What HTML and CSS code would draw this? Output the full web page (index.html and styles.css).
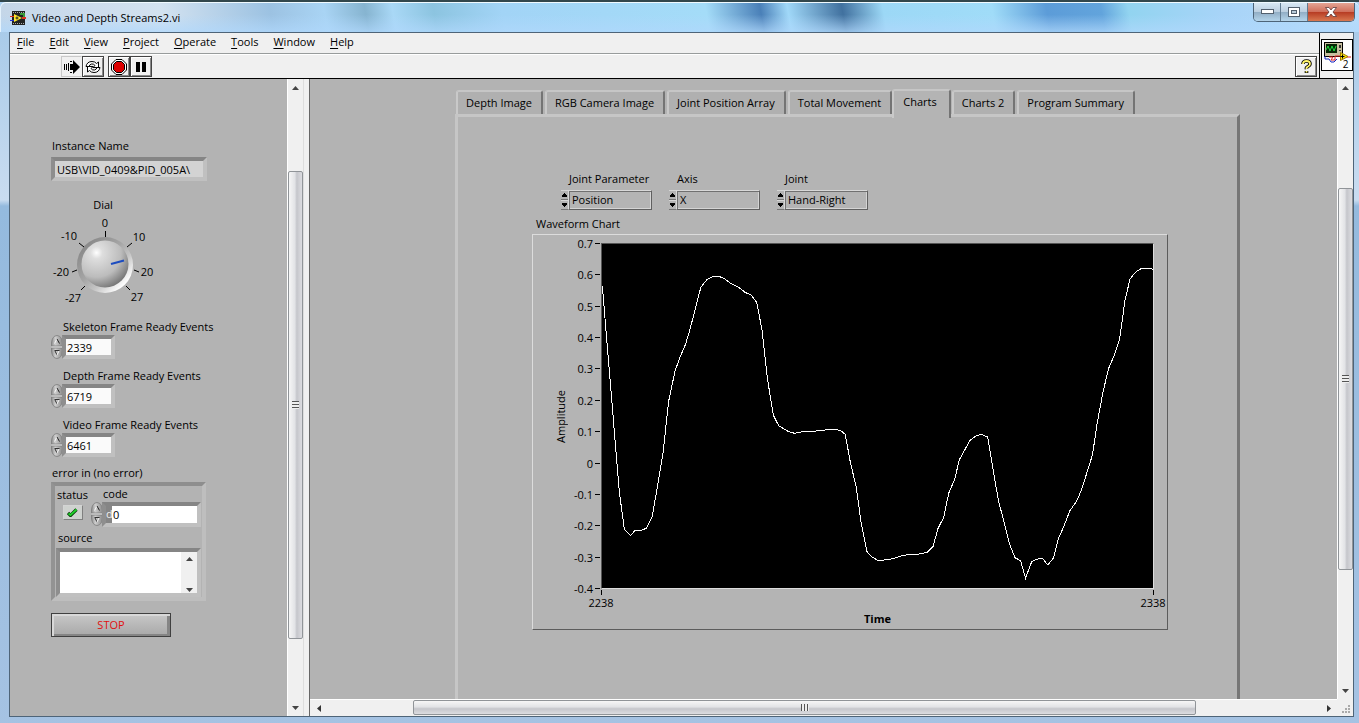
FILE: index.html
```html
<!DOCTYPE html>
<html lang="en">
<head>
<meta charset="utf-8">
<title>Video and Depth Streams2.vi</title>
<link rel="stylesheet" href="styles.css">
</head>
<body>
<svg class="defs" width="0" height="0" aria-hidden="true">
  <defs>
    <linearGradient id="metal" x1="0" x2="1" y1="0" y2="0">
      <stop offset="0" stop-color="#8e8e8e"/><stop offset=".35" stop-color="#cecece"/><stop offset="1" stop-color="#8a8a8a"/>
    </linearGradient>
    <radialGradient id="knob" cx=".32" cy=".26" r=".8">
      <stop offset="0" stop-color="#fff"/><stop offset=".16" stop-color="#dedede"/><stop offset=".65" stop-color="#bcbcbc"/><stop offset="1" stop-color="#747474"/>
    </radialGradient>
    <linearGradient id="ring" x1="0" x2="1" y1="0" y2="1">
      <stop offset=".1" stop-color="#858585"/><stop offset=".45" stop-color="#a6a6a6"/><stop offset=".62" stop-color="#c4c4c4"/><stop offset=".85" stop-color="#fff"/><stop offset="1" stop-color="#c8c8c8"/>
    </linearGradient>
    <symbol id="spinner" viewBox="0 0 12 24">
      <path d="M.5 11V8Q1 1 6 .5Q11 1 11.500 8V11ZM.5 13V16Q1 23 6 23.500Q11 23 11.500 16V13Z" fill="url(#metal)" stroke="#7c7c7c" stroke-width=".8"/>
      <path d="M.5 12H11.500" stroke="#dcdcdc"/>
      <path d="M3.500 8.500L6 4" stroke="#f8f8f8"/><path d="M6 4L8.500 8.500" stroke="#222"/>
      <path d="M3.500 15.500H8.500" stroke="#333"/><path d="M4 16L6 20" stroke="#333"/><path d="M8 16L6 20" stroke="#f8f8f8"/>
    </symbol>
    <symbol id="up" viewBox="0 0 7 4"><path d="M0 4L3.500 0L7 4Z" fill="#444"/></symbol>
    <symbol id="down" viewBox="0 0 7 4"><path d="M0 0L3.500 4L7 0Z" fill="#444"/></symbol>
    <symbol id="left" viewBox="0 0 4 7"><path d="M4 0L0 3.500L4 7Z" fill="#333"/></symbol>
    <symbol id="right" viewBox="0 0 4 7"><path d="M0 0L4 3.500L0 7Z" fill="#333"/></symbol>
    <symbol id="step-up" viewBox="0 0 5 4"><path d="M2 0H3V1H4V2H5V4H0V2H1V1H2Z"/></symbol>
    <symbol id="step-down" viewBox="0 0 5 4"><path d="M0 0H5V2H4V3H3V4H2V3H1V2H0Z"/></symbol>
  </defs>
</svg>

<header class="titlebar">
  <svg class="app-icon" viewBox="0 0 16 14" width="16" height="14">
    <rect x="2" width="13" height="14" fill="#222"/>
    <path d="M3 1.500H14M3 12.500H14" stroke="#aaa" stroke-dasharray="1 1"/>
    <path d="M10 3H14V7" fill="none" stroke="#3a9a3a" stroke-width="2"/>
    <path d="M4 3L12 7L4 11Z" fill="#ffe62b"/><path d="M7 5.500V8.500M5.500 7H8.500" stroke="#222"/>
    <path d="M0 5.500H4" stroke="#e03020"/><path d="M0 9.500H4" stroke="#2030d0"/><path d="M12 7H16" stroke="#e03020" stroke-width="2"/>
  </svg>
  <h1 class="title">Video and Depth Streams2.vi</h1>
  <div class="window-buttons">
    <button class="wb" aria-label="Minimize"><svg width="13" height="6" viewBox="0 0 13 6"><rect x=".5" y=".5" width="12" height="4" fill="#fff" stroke="#53606e"/></svg></button>
    <button class="wb" aria-label="Maximize"><svg width="12" height="10" viewBox="0 0 12 10"><rect x=".5" y=".5" width="11" height="9" fill="#fff" stroke="#53606e"/><rect x="3.500" y="3.500" width="5" height="3" fill="#b9cbd9" stroke="#53606e"/></svg></button>
    <button class="wb wb-close" aria-label="Close"><svg width="12" height="10" viewBox="0 0 12 10"><path d="M.5 .5H4L6 3L8 .5H11.500L8 5L11.500 9.500H8L6 7L4 9.500H.5L4 5Z" fill="#fff" stroke="#5e3a3a" stroke-width=".8"/></svg></button>
  </div>
</header>

<main class="client">
  <div class="top">
    <div class="bars">
      <nav class="menu">
        <button><u>F</u>ile</button><button><u>E</u>dit</button><button><u>V</u>iew</button><button><u>P</u>roject</button><button><u>O</u>perate</button><button><u>T</u>ools</button><button><u>W</u>indow</button><button><u>H</u>elp</button>
      </nav>
      <div class="toolbar">
        <button class="tool tool-flat" aria-label="Run"><svg width="16" height="14" viewBox="0 0 16 14"><path d="M.5 4V10M2.500 4V10M4.500 3V11" stroke="#000"/><path d="M6 4H9V0L16 7L9 14V10H6Z"/><path d="M6 1.500H8M6 12.500H8" stroke="#000"/></svg></button>
        <button class="tool" aria-label="Run continuously"><svg width="16" height="14" viewBox="0 0 16 14" fill="#fff" stroke="#000"><path d="M1 6.500Q2 1.500 7 1.500Q10 1.500 11.500 3.500L13.500 2V7.500H8L10 5.500Q8.500 3.500 6.500 4Q4.500 4.500 4 6.500Z"/><path d="M15 7.500Q14 12.500 9 12.500Q6 12.500 4.500 10.500L2.500 12V6.500H8L6 8.500Q7.500 10.500 9.500 10Q11.500 9.500 12 7.500Z"/></svg></button>
        <span class="tool-gap"></span>
        <button class="tool" aria-label="Abort"><svg width="16" height="16" viewBox="0 0 16 16"><path d="M5 .5H11L15.500 5V11L11 15.500H5L.5 11V5Z" fill="#fff" stroke="#000"/><path d="M5.500 2.500H10.500L13.500 5.500V10.500L10.500 13.500H5.500L2.500 10.500V5.500Z" fill="#dc0000" stroke="#000"/></svg></button>
        <button class="tool" aria-label="Pause"><svg width="10" height="10" viewBox="0 0 10 10"><path d="M0 0H4V10H0ZM6 0H10V10H6Z"/></svg></button>
        <button class="tool tool-help" aria-label="Context help"><svg width="11" height="15" viewBox="0 0 11 15"><path d="M2 5Q2 2 5.500 2T9 5Q9 6.500 7 7.500T5.500 10M5.500 12V14" fill="none" stroke="#000" stroke-width="3.600"/><path d="M2 5Q2 2 5.500 2T9 5Q9 6.500 7 7.500T5.500 10M5.500 12V13.500" fill="none" stroke="#fff46a" stroke-width="1.800"/></svg></button>
      </div>
    </div>
    <div class="vi-cell">
      <div class="vi-icon">
        <svg width="28" height="28" viewBox="0 0 28 28">
          <rect x="1.500" y="1.500" width="18" height="14" fill="#c8c0a0" stroke="#000"/><rect x="3" y="3" width="11" height="9" fill="#062806"/>
          <path d="M3 9L5 5L7 10L9 5L11 10L13 5" fill="none" stroke="#20e040"/><path d="M17 4V7M17 9V10" stroke="#333" stroke-width="2"/>
          <path d="M2 15V18H6L8 21H11L14 18" fill="none" stroke="#1626c0"/><path d="M6 16H10L8 19L12 19V15H17M22 16H28" fill="none" stroke="#e02020"/>
          <path d="M17.500 11.500L25 15.500L17.500 19.500Z" fill="#ffe80a" stroke="#a07a00"/><path d="M19.500 13.500V17.500M17.500 15.500H21.500" stroke="#000"/>
        </svg>
        <span class="vi-number">2</span>
      </div>
    </div>
  </div>

  <div class="panes">
    <section class="left-pane">
      <div class="field">
        <label for="instance">Instance Name</label>
        <input id="instance" class="recess instance" value="USB\VID_0409&amp;PID_005A\" readonly>
      </div>
      <div class="dial">
        <span>Dial</span>
        <svg width="104" height="94" viewBox="0 0 104 94" role="img" aria-label="Dial at 20">
          <circle cx="54" cy="52" r="28" fill="url(#ring)"/><circle cx="54" cy="51" r="23.500" fill="url(#knob)"/>
          <path d="M60 51L73 47.500" stroke="#1c4cc0" stroke-width="2"/>
          <path d="M54.500 18V24M28 30L33 34M81 30L76 34M21 59L26 57M83 57L88 59M30 77L34 73M75 73L79 77" stroke="#000" fill="none"/>
          <g class="dial-text"><text x="54" y="14">0</text><text x="18" y="27">-10</text><text x="88" y="28">10</text><text x="10" y="63">-20</text><text x="96" y="63">20</text><text x="22" y="89">-27</text><text x="86" y="88">27</text></g>
        </svg>
      </div>
      <div class="counter"><label for="skel">Skeleton Frame Ready Events</label><div class="spin-row"><svg width="12" height="24"><use href="#spinner"/></svg><input id="skel" class="recess number" value="2339"></div></div>
      <div class="counter"><label for="depth">Depth Frame Ready Events</label><div class="spin-row"><svg width="12" height="24"><use href="#spinner"/></svg><input id="depth" class="recess number" value="6719"></div></div>
      <div class="counter"><label for="video">Video Frame Ready Events</label><div class="spin-row"><svg width="12" height="24"><use href="#spinner"/></svg><input id="video" class="recess number" value="6461"></div></div>
      <div class="error-title">error in (no error)</div>
      <div class="cluster">
        <div class="cluster-row">
          <div class="status"><span>status</span><button class="led" aria-label="status"><svg width="11" height="9" viewBox="0 0 11 9"><path d="M1 5L3.500 7.500L9.500 1.500" fill="none" stroke="#063c06" stroke-width="3.200"/><path d="M1.500 5.500L3.500 7L9.500 1.500" fill="none" stroke="#1fd02c" stroke-width="1.800"/></svg></button></div>
          <div class="code"><label for="code">code</label><div class="spin-row"><svg width="12" height="24"><use href="#spinner"/></svg><div class="recess radix"><span>d</span><input id="code" value="0"></div></div></div>
        </div>
        <label class="source-label" for="source">source</label>
        <div class="recess source"><textarea id="source"></textarea><div class="mini-scroll"><svg width="7" height="4"><use href="#up"/></svg><svg width="7" height="4"><use href="#down"/></svg></div></div>
      </div>
      <button class="stop">STOP</button>
    </section>

    <div class="scroll v s-left"><button aria-label="Up"><svg width="7" height="4"><use href="#up"/></svg></button><i class="before"></i><span class="thumb"><b></b></span><i class="after"></i><button aria-label="Down"><svg width="7" height="4"><use href="#down"/></svg></button></div>
    <div class="splitter"></div>

    <section class="right-pane">
      <div class="view">
        <div class="tabs" role="tablist">
          <button role="tab">Depth Image</button><button role="tab">RGB Camera Image</button><button role="tab">Joint Position Array</button><button role="tab">Total Movement</button><button role="tab" class="active" aria-selected="true">Charts</button><button role="tab">Charts 2</button><button role="tab">Program Summary</button>
        </div>
        <div class="page">
          <div class="rings">
            <div class="ring"><label for="param">Joint Parameter</label><div class="ring-box"><span class="steps"><i><svg width="5" height="4"><use href="#step-up"/></svg></i><i><svg width="5" height="4"><use href="#step-down"/></svg></i></span><select id="param"><option>Position</option></select></div></div>
            <div class="ring"><label for="axis">Axis</label><div class="ring-box"><span class="steps"><i><svg width="5" height="4"><use href="#step-up"/></svg></i><i><svg width="5" height="4"><use href="#step-down"/></svg></i></span><select id="axis"><option>X</option></select></div></div>
            <div class="ring"><label for="joint">Joint</label><div class="ring-box"><span class="steps"><i><svg width="5" height="4"><use href="#step-up"/></svg></i><i><svg width="5" height="4"><use href="#step-down"/></svg></i></span><select id="joint"><option>Hand-Right</option></select></div></div>
          </div>
          <div class="chart-title">Waveform Chart</div>
          <div class="chart">
            <div class="y-title"><span>Amplitude</span></div>
            <div class="y-axis"><span>0.7</span><span>0.6</span><span>0.5</span><span>0.4</span><span>0.3</span><span>0.2</span><span>0.1</span><span>0</span><span>-0.1</span><span>-0.2</span><span>-0.3</span><span>-0.4</span></div>
            <svg class="plot" viewBox="36 27 1656 1032" preserveAspectRatio="none" role="img" aria-label="Amplitude over time">
              <polyline points="37,153 88,770 103,882 122,901 136,886 155,886 170,879 187,845 205,740 220,650 236,500 255,410 270,367 287,328 300,285 318,215 333,157 352,133 370,124 388,124 405,132 421,144 447,157 466,172 484,180 501,202 517,285 533,430 551,541 567,572 597,590 615,595 640,590 672,589 690,586 740,583 755,588 767,598 783,685 800,755 815,865 833,952 848,966 865,976 878,976 910,971 935,963 960,958 990,957 1013,952 1031,934 1046,880 1063,847 1078,775 1096,733 1110,674 1126,645 1143,615 1160,603 1176,598 1195,606 1211,700 1227,795 1244,860 1261,927 1277,968 1294,977 1309,1029 1327,981 1340,974 1359,969 1376,990 1393,969 1407,912 1425,872 1442,827 1462,800 1478,762 1510,660 1525,560 1542,470 1558,402 1576,360 1592,310 1608,195 1623,132 1640,111 1658,100 1680,100 1692,103"/>
            </svg>
            <div class="x-axis"><span>2238</span><span>2338</span></div>
            <div class="x-title">Time</div>
          </div>
        </div>
      </div>
      <div class="scroll v s-right"><button aria-label="Up"><svg width="7" height="4"><use href="#up"/></svg></button><i class="before"></i><span class="thumb"><b></b></span><i class="after"></i><button aria-label="Down"><svg width="7" height="4"><use href="#down"/></svg></button></div>
      <div class="scroll h s-bottom"><button aria-label="Left"><svg width="4" height="7"><use href="#left"/></svg></button><i class="before"></i><span class="thumb"><b></b></span><i class="after"></i><button aria-label="Right"><svg width="4" height="7"><use href="#right"/></svg></button></div>
      <div class="corner"><svg width="9" height="9" viewBox="0 0 9 9" fill="#aaa"><path d="M6 0H8V2H6ZM3 3H5V5H3ZM6 3H8V5H6ZM0 6H2V8H0ZM3 6H5V8H3ZM6 6H8V8H6Z"/></svg></div>
    </section>
  </div>
</main>
</body>
</html>
```
FILE: styles.css
```css
* { box-sizing: border-box; }

body {
  margin: 0;
  height: 100vh;
  padding: 0 5px 6px 9px;
  display: flex;
  flex-direction: column;
  overflow: hidden;
  color: #000;
  font: 11px/16px "Open Sans", "Noto Sans", sans-serif;
  border-top: 2px solid #32474c;
  background:
    linear-gradient(#a9cbe9, #c9dcf0 170px, #94bade 176px, #a6c3e3) 0 30px / 100% 100% no-repeat,
    #b0d4f4;
}

button, input, select, textarea { font: inherit; color: inherit; margin: 0; }
button { padding: 0; border: 0; background: none; }
.defs { position: absolute; }

/* Title bar */
.titlebar {
  flex: none;
  height: 30px;
  margin: 0 -5px 0 -9px;
  padding: 0 4px 0 9px;
  display: flex;
  align-items: center;
  gap: 6px;
  border-top: 1px solid #f0faff;
  border-left: 1px solid #e4f2fc;
  border-radius: 6px 6px 0 0;
  background:
    linear-gradient(transparent 40%, rgba(176, 216, 252, .75)),
    linear-gradient(80deg, #c4d6e8, #d3e2f0 12%, #9cc2e2 20%, #a9d4f4 24%, #86b4d0 27%, #a9d8f6 29%, #8cc4e0 32%, #a2d4f6 37%, #a4dcf8 52%, #4a80b8 56%, #a0d8f8 58%, #41719f 62%, #9cd8f6 65%, #a0dcf8 73%, #5c9cd8 77%, #62a4dc 81%, #92d4f0 83%, #a8d4f8 90%, #b8dcfa);
}
.app-icon { flex: none; }
.title { flex: 1; margin: 0; font-size: 11px; font-weight: 400; }
.window-buttons {
  align-self: flex-start;
  display: flex;
  border: 1px solid #4d6478;
  border-top: 0;
  border-radius: 0 0 5px 5px;
  overflow: hidden;
}
.wb {
  width: 27px;
  height: 18px;
  display: grid;
  place-items: center;
  border-right: 1px solid #637c91;
  background: linear-gradient(#d8e8f4, #bccfe0 48%, #91adc4 50%, #b4d4ea);
}
.wb-close { width: 46px; border-right: 0; background: linear-gradient(#e4a494, #d0705c 48%, #b63a22 50%, #d87850); }

/* Client area */
.client {
  flex: 1;
  min-height: 0;
  display: flex;
  flex-direction: column;
  border: 1px solid #4e6478;
  background: #f0f0f0;
}
.top { flex: none; display: flex; border-bottom: 1px solid #000; }
.bars { flex: 1; }
.menu {
  height: 21px;
  padding: 0 7px 2px;
  display: flex;
  gap: 15px;
  align-items: center;
  border-bottom: 1px solid #989c9c;
}
.menu u { text-underline-offset: 2px; }
.toolbar { height: 24px; padding: 1px 2px 0 51px; display: flex; border-top: 1px solid #fff; }
.tool {
  width: 22px;
  height: 21px;
  display: grid;
  place-items: center;
  border: 1px solid #444;
  box-shadow: inset 1px 1px #fff, inset -1px -1px #888;
}
.tool-flat { width: 21px; border-color: #c8c8c8 #f0f0f0 #c8c8c8 #c8c8c8; box-shadow: none; }
.tool-gap { width: 4px; }
.tool-help { margin-left: auto; }
.vi-cell { width: 34px; display: grid; place-items: center; padding-bottom: 2px; border-left: 1px solid #000; }
.vi-icon { position: relative; width: 32px; height: 32px; padding: 1px; border: 1px solid #000; background: #fff; }
.vi-number { position: absolute; right: 3px; bottom: 0; font-size: 10px; line-height: 12px; }

.panes { flex: 1; min-height: 0; display: flex; background: #b3b3b3; }

/* Left pane */
.left-pane {
  flex: none;
  width: 277px;
  padding: 59px 0 0 41px;
  display: flex;
  flex-direction: column;
  align-items: flex-start;
  overflow: hidden;
}
.recess {
  border: 4px solid;
  border-color: #858585 #c0c0c0 #c0c0c0 #8e8e8e;
  border-radius: 0;
  outline: 0;
}
.field { display: flex; flex-direction: column; gap: 3px; }
.field label { padding-left: 1px; }
.instance { width: 156px; height: 24px; padding: 0 2px; background: #d3d3d3; }
.dial { width: 104px; margin-top: 16px; display: flex; flex-direction: column; align-items: center; }
.dial svg { overflow: visible; }
.dial-text { font-size: 11px; text-anchor: middle; }
.counter { margin-top: 9px; }
.dial + .counter { margin-top: 12px; }
.counter label { display: block; padding-left: 12px; }
.spin-row { display: flex; }
.number { width: 53px; height: 24px; padding: 0 1px; margin-left: -1px; background: #fafafa; }
.error-title { margin-top: 8px; padding-left: 1px; }
.cluster {
  width: 155px;
  margin-top: 1px;
  border: 4px solid;
  border-color: #8e8e8e #bebebe #bebebe #939393;
}
.cluster-row { display: flex; align-items: flex-start; }
.status { width: 35px; display: flex; flex-direction: column; align-items: center; gap: 2px; padding-top: 1px; }
.led {
  width: 20px;
  height: 15px;
  display: grid;
  place-items: center;
  border: 1px solid;
  border-color: #d4d4d4 #808080 #808080 #d4d4d4;
  background: #cfd2cf;
}
.code label { display: block; padding-left: 13px; }
.code .spin-row { padding-left: 1px; }
.radix { display: flex; width: 99px; height: 25px; margin-left: -1px; }
.radix span { flex: none; width: 6px; color: #eee; background: #858585; }
.radix input { min-width: 0; flex: 1; border: 0; padding: 0 1px; background: #fff; outline: 0; }
.source-label { display: block; padding: 3px 0 2px 3px; }
.source { display: flex; width: 145px; height: 49px; margin-left: 1px; background: #fff; }
.source textarea { flex: 1; min-width: 0; border: 0; padding: 2px; resize: none; outline: 0; background: #fff; overflow: hidden; }
.mini-scroll { width: 16px; display: flex; flex-direction: column; align-items: center; justify-content: space-between; padding: 5px 0 1px; background: #f0f0f0; }
.stop {
  width: 120px;
  height: 24px;
  margin-top: 12px;
  color: #e01010;
  border: 1px solid #404040;
  box-shadow: inset 2px 2px #d8d8d8, inset -3px -2px #858585;
  background: linear-gradient(#c8c8c8, #a8a8a8);
}

/* Scroll bars */
.scroll { display: flex; background: #f0f0f0; }
.scroll button { flex: none; display: grid; place-items: center; width: 15px; height: 17px; }
.scroll .thumb { display: grid; place-items: center; border: 1px solid #909498; border-radius: 2px; }
.scroll.v { width: 16px; flex-direction: column; flex: none; border-left: 1px solid #fff; }
.scroll.v .thumb { width: 15px; background: linear-gradient(90deg, #f6f6f6, #e2e3e6 45%, #c5c6cb 60%, #dcdce0); }
.scroll.h { height: 17px; border-top: 1px solid #fff; }
.scroll.h button { width: 17px; height: 16px; }
.scroll.h .thumb { height: 15px; background: linear-gradient(#f6f6f6, #e2e3e6 45%, #c5c6cb 60%, #dcdce0); }
.thumb b { width: 7px; height: 8px; background: repeating-linear-gradient(#555 0 1px, #eee 1px 3px); }
.h .thumb b { width: 8px; height: 7px; background: repeating-linear-gradient(90deg, #555 0 1px, #eee 1px 3px); }
.s-left .before { flex: 75; } .s-left .thumb { flex: 469; } .s-left .after { flex: 60; }
.s-right .before { flex: 92; } .s-right .thumb { flex: 382; } .s-right .after { flex: 113; }
.s-bottom .before { flex: 86; } .s-bottom .thumb { flex: 783; } .s-bottom .after { flex: 124; }
.splitter { flex: none; width: 7px; border-left: 1px solid #ddd; border-right: 1px solid #666; background: #f0f0f0; }

/* Right pane */
.right-pane { flex: 1; min-width: 0; display: grid; grid-template: minmax(0, 1fr) 17px / minmax(0, 1fr) 16px; }
.view { display: flex; flex-direction: column; padding: 10px 97px 0 145px; overflow: hidden; }
.corner { display: grid; place-items: end; padding: 2px; background: #f0f0f0; }
.tabs { display: flex; align-items: flex-end; gap: 2px; padding-left: 1px; }
.tabs button {
  flex: none;
  height: 24px;
  padding: 0 9px 0 8px;
  white-space: nowrap;
  background: #b0b0b0;
  border: 2px solid;
  border-color: #c6c6c6 #747474 #b0b0b0 #c9c9c9;
  border-bottom: 0;
  border-radius: 3px 3px 0 0;
}
.tabs .active { position: relative; height: 29px; padding: 0 12px 6px 9px; margin: 0 -1px -4px -2px; background: #b4b4b4; }
.page {
  flex: 1;
  min-height: 0;
  padding: 54px 69px 0 74px;
  border: 3px solid;
  border-color: #c6c6c6 #767676 #b4b4b4 #c6c6c6;
  border-bottom: 0;
  background: #b4b4b4;
}
.rings { display: flex; gap: 17px; padding-left: 29px; }
.ring { width: 91px; }
.ring label { display: block; padding-left: 8px; white-space: nowrap; }
.ring-box { display: flex; height: 20px; margin-top: 3px; }
.steps { width: 7px; display: flex; flex-direction: column; }
.steps i { flex: 1; display: grid; place-items: center; border: 1px solid; border-color: #d6d6d6 #777 #777 #d6d6d6; border-width: 1px 0; }
.ring select {
  flex: 1;
  min-width: 0;
  appearance: none;
  padding: 0 3px;
  border: 1px solid;
  border-color: #d8d8d8 #606060 #606060 #d8d8d8;
  border-radius: 0;
  box-shadow: inset 1px 1px #707070, inset -1px -1px #d4d4d4;
  background: #b4b4b4;
  line-height: 16px;
}
.chart-title { margin-top: 6px; padding-left: 4px; }
.chart {
  margin-top: 2px;
  padding: 8px 13px 0 0;
  display: grid;
  grid-template-columns: 36px 32px minmax(0, 1fr);
  border: 1px solid;
  border-color: #dcdcdc #5c5c5c #5c5c5c #dcdcdc;
}
.y-title { display: grid; place-items: center end; }
.y-title span { writing-mode: vertical-rl; transform: rotate(180deg); }
.y-axis { display: flex; flex-direction: column; justify-content: space-between; align-items: flex-end; margin: -7px 0 -8px; padding-right: 1px; }
.y-axis span { white-space: nowrap; }
.y-axis span::after { content: ""; display: inline-block; width: 5px; height: 1px; margin-left: 2px; vertical-align: 4px; background: #000; }
.plot {
  width: 100%;
  height: 346px;
  border: 1px solid;
  border-color: #555 #ddd #ddd #555;
  background: #000;
}
.plot polyline { fill: none; stroke: #fff; stroke-width: 1px; vector-effect: non-scaling-stroke; shape-rendering: crispEdges; }
.x-axis { grid-column: 3; display: flex; justify-content: space-between; margin: 1px -13px 0 -14px; }
.x-axis span { width: 28px; text-align: center; }
.x-axis span::before { content: ""; display: block; width: 1px; height: 5px; margin: 0 auto; background: #000; }
.x-title { grid-column: 3; text-align: center; font-weight: 700; padding-bottom: 2px; }
```
